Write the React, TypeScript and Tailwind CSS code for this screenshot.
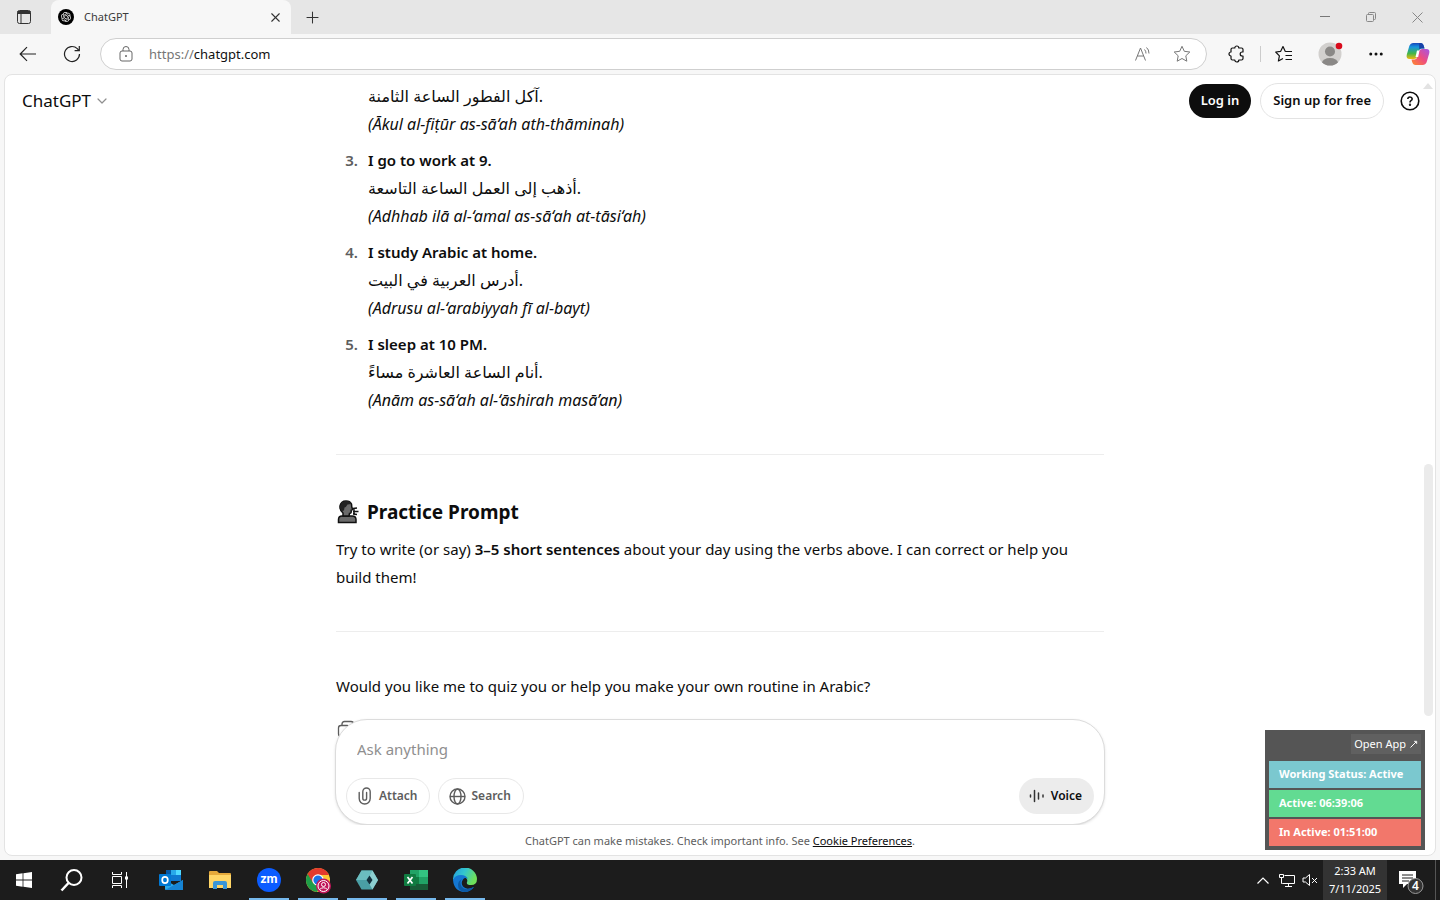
import { useState } from "react";
import type { ReactNode } from "react";
import { ChevronDown, Plus, X, Ellipsis } from "lucide-react";
import { RiOpenaiFill } from "react-icons/ri";

const sentences = [
  {
    id: 2,
    title: "",
    arabic: "آكل الفطور الساعة الثامنة.",
    latin: "(Ākul al-fiṭūr as-sā‘ah ath-thāminah)",
  },
  {
    id: 3,
    title: "I go to work at 9.",
    arabic: "أذهب إلى العمل الساعة التاسعة.",
    latin: "(Adhhab ilā al-‘amal as-sā‘ah at-tāsi‘ah)",
  },
  {
    id: 4,
    title: "I study Arabic at home.",
    arabic: "أدرس العربية في البيت.",
    latin: "(Adrusu al-‘arabiyyah fī al-bayt)",
  },
  {
    id: 5,
    title: "I sleep at 10 PM.",
    arabic: "أنام الساعة العاشرة مساءً.",
    latin: "(Anām as-sā‘ah al-‘āshirah masā’an)",
  },
];

const TitleBar = () => (
  <div className="flex h-[34px] shrink-0 bg-[#e6e6e6]">
    <button aria-label="Tab actions" className="flex w-[51px] items-center justify-center pr-[3px]">
      <svg width="16" height="16" viewBox="0 0 16 16" fill="none" stroke="#333">
        <rect x="1.5" y="1.5" width="13" height="13" rx="2" />
        <path d="M1.5 3.5h13" strokeWidth="3" />
        <path d="M5 5v9.500" />
      </svg>
    </button>
    <div className="flex w-60 items-center rounded-t-lg bg-[#f7f7f7] pl-[7px] pr-2">
      <span className="flex size-4 items-center justify-center rounded-full bg-black text-white">
        <RiOpenaiFill size={12} />
      </span>
      <span className="ml-[10px] flex-1 text-[11px] text-[#3b3b3b]">ChatGPT</span>
      <button aria-label="Close tab" className="text-[#333]">
        <X size={15} strokeWidth={1.8} />
      </button>
    </div>
    <button aria-label="New tab" className="flex w-[42px] items-center justify-center text-[#333]">
      <Plus size={19} strokeWidth={1.3} />
    </button>
    <div className="ml-auto flex">
      <button aria-label="Minimize" className="flex w-[46px] items-center justify-center">
        <svg width="10" height="10" stroke="#777">
          <path d="M0 4.500h10" />
        </svg>
      </button>
      <button aria-label="Restore" className="flex w-[46px] items-center justify-center">
        <svg width="10" height="10" viewBox="0 0 10 10" fill="none" stroke="#888">
          <rect x=".5" y="2.500" width="7" height="7" rx="1" />
          <path d="M2.500 2.500V1.500q0-1 1-1h5q1 0 1 1v5q0 1-1 1H7.500" />
        </svg>
      </button>
      <button aria-label="Close window" className="flex w-[46px] items-center justify-center">
        <svg width="11" height="11" viewBox="0 0 11 11" stroke="#888">
          <path d="m.5.5 10 10m0-10-10 10" />
        </svg>
      </button>
    </div>
  </div>
);

const ToolButton = ({ label, children }: { label: string; children: ReactNode }) => (
  <button aria-label={label} className="flex w-[46px] items-center justify-center">
    {children}
  </button>
);

const Toolbar = () => (
  <div className="flex h-10 shrink-0 items-center bg-[#f7f7f7] pr-[3px]">
    <button aria-label="Back" className="flex w-[50px] items-center justify-center pl-[6px]">
      <svg width="18" height="16" viewBox="0 0 18 16" fill="none" stroke="#222" strokeWidth="1.2">
        <path d="M17 8H1.500M8 1.200 1.200 8 8 14.800" />
      </svg>
    </button>
    <button aria-label="Refresh" className="flex w-[50px] items-center justify-center pr-[6px]">
      <svg width="18" height="18" viewBox="0 0 18 18" fill="none" stroke="#222" strokeWidth="1.200">
        <path d="M16.500 9a7.500 7.500 0 1 1-2.200-5.300L16 5.500" />
        <path d="M16.300 1v4.700h-4.700" />
      </svg>
    </button>
    <div className="flex h-8 flex-1 items-center rounded-full border border-[#cfcfcf] bg-white pl-[18px] pr-[15px]">
      <svg width="14" height="16" viewBox="0 0 14 16" fill="none" stroke="#666">
        <rect x="1" y="5" width="12" height="10" rx="2" />
        <path d="M4 5V3.500a3 3 0 0 1 6 0V5" />
        <circle cx="7" cy="10" r=".6" fill="#666" />
      </svg>
      <a href="https://chatgpt.com" className="ml-4 flex-1 pt-px text-[13px] text-[#111]">
        <span className="text-[#767676]">https://</span>chatgpt.com
      </a>
      <button aria-label="Read aloud" className="mr-[21px]">
        <svg width="18" height="18" viewBox="0 0 18 18" fill="none" stroke="#777">
          <path d="m1.500 15.500 5-12.500 5 12.500M3.300 11h6.400M10.500 4.500q1.500 1.500 1.500 4M12.500 2.500q2.500 2 2.500 6" />
        </svg>
      </button>
      <button aria-label="Add to favorites">
        <svg width="18" height="18" viewBox="0 0 18 18" fill="none" stroke="#777" strokeLinejoin="round">
          <path d="m9 1.300 2.300 5 5.500.7-4 3.800 1 5.400L9 13.500l-4.800 2.700 1-5.400-4-3.800 5.500-.7z" />
        </svg>
      </button>
    </div>
    <div className="ml-[7px] flex h-8 items-center">
      <ToolButton label="Extensions">
        <svg width="18" height="18" viewBox="0 0 18 18" fill="none" stroke="#111" strokeWidth="1.200" strokeLinejoin="round">
          <path d="M4.500 3h2.300a2 2 0 0 1 4 0h2.700q1.500 0 1.500 1.500V7h-.800a2 2 0 0 0 0 4h.8v2.500q0 1.500-1.500 1.500h-2.700a2 2 0 0 1-4 0H4.500Q3 15 3 13.500V11a2 2 0 0 1 0-4V4.500Q3 3 4.500 3z" />
        </svg>
      </ToolButton>
      <span className="h-4 w-px bg-[#ccc]" />
      <ToolButton label="Favorites">
        <svg width="18" height="18" viewBox="0 0 18 18" fill="none" stroke="#111" strokeWidth="1.200" strokeLinejoin="round">
          <path d="M10.300 6.500 8 1.500 5.700 6.300l-5 .700 3.700 3.800-1 5.200L8 13.500M10.300 6.500H17M10.500 10.500H17M10.500 14.500H17" />
        </svg>
      </ToolButton>
      <ToolButton label="Profile">
        <svg width="26" height="26" viewBox="0 0 26 26">
          <clipPath id="avatar">
            <circle cx="13" cy="13" r="11.500" />
          </clipPath>
          <circle cx="13" cy="13" r="11.500" fill="#d2d0ce" />
          <g fill="#8a8886" clipPath="url(#avatar)">
            <circle cx="13" cy="10.500" r="5" />
            <ellipse cx="13" cy="22" rx="8" ry="5" />
          </g>
          <circle cx="22" cy="5" r="3.300" fill="#d90b1c" />
        </svg>
      </ToolButton>
      <ToolButton label="Settings and more">
        <Ellipsis size={18} color="#111" />
      </ToolButton>
      <button aria-label="Copilot" className="flex w-[38px] items-center justify-center">
        <svg width="24" height="22" viewBox="0 0 24 22">
          <defs>
            <linearGradient id="copilotCool" x1="0" y1="1" x2="0" y2="0">
              <stop stopColor="#f2b90f" />
              <stop offset=".35" stopColor="#43b649" />
              <stop offset=".75" stopColor="#1494e0" />
              <stop offset="1" stopColor="#1746b8" />
            </linearGradient>
            <linearGradient id="copilotWarm" x1="0" y1="1" x2="1" y2="0">
              <stop stopColor="#ff8a2b" />
              <stop offset=".5" stopColor="#ee4d80" />
              <stop offset="1" stopColor="#a456e8" />
            </linearGradient>
          </defs>
          <path d="M7.500 0h7q2.500 0 3.300 3l.7 2.500h-3q-2 0-2.700 2.500l-1.500 5.500Q10.300 16 8 16H3.500Q0 16 .7 12L3 4q1-4 4.500-4z" fill="url(#copilotCool)" />
          <path d="M16.500 22h-7Q7 22 6.200 19l-.7-2.500h3q2 0 2.700-2.500l1.500-5.500Q13.700 6 16 6h4.500Q24 6 23.300 10L21 18q-1 4-4.500 4z" fill="url(#copilotWarm)" />
          <path d="M11 7.500h2.500l-1.300 6.500H9.500z" fill="#fff" />
          <path d="M13 0h1.500q2.500 0 3.300 3l.7 2.500h-3q-1.500 0-2.200 1z" fill="#1742a8" />
        </svg>
      </button>
    </div>
  </div>
);

const Conversation = () => (
  <article className="mx-auto w-full max-w-[768px] pt-[7px] text-[15px] leading-7">
    <ol className="flex flex-col gap-2">
      {sentences.map((item) => (
        <li key={item.id} className="flex">
          <span className="mr-[10px] w-[22px] shrink-0 text-right font-semibold text-[#5d5d5d]">
            {item.title && `${item.id}.`}
          </span>
          <div>
            {item.title && <p className="font-semibold">{item.title}</p>}
            <p className="h-7 text-base leading-7">{item.arabic}</p>
            <p className="h-7 text-base leading-7 italic">{item.latin}</p>
          </div>
        </li>
      ))}
    </ol>
    <hr className="mt-10 border-[#ededed]" />
    <h3 className="mt-[43px] flex items-center text-[19px] font-bold">
      <svg width="23" height="24" viewBox="0 0 23 24" className="mr-2" fill="#6b6b6b" stroke="#111" strokeWidth="1.500">
        <path d="M2.500 22.500v-3Q2.500 16 6 16h10q4 0 4 3.500v3z" />
        <path d="M7 16v-3Q3.500 10 4 6q1-5 6-5 4 0 5.500 3l.3 3 .9 2.500-1.500.8v2q0 1-1.700 1.200L13 16z" />
        <path d="M4 8q.5-7 6.500-7 4 0 5 3l-4 .5q-1.500 3-3 3l-.5 3-2 .5z" fill="#222" stroke="none" />
        <path d="m17 8.500 4-.5M17 11.500h5.500M17 14l4 .5M18 8v6.500" />
      </svg>
      Practice Prompt
    </h3>
    <p className="mt-[9px]">
      Try to write (or say) <strong className="font-semibold">3–5 short sentences</strong> about
      your day using the verbs above. I can correct or help you build them!
    </p>
    <hr className="mt-10 border-[#ededed]" />
    <p className="mt-10">
      Would you like me to quiz you or help you make your own routine in Arabic?
    </p>
    <button aria-label="Copy" className="mt-5 ml-[1px] block">
      <svg width="18" height="18" viewBox="0 0 18 18" fill="none" stroke="#5d5d5d" strokeWidth="1.300">
        <rect x="1.500" y="5.500" width="11" height="11" rx="2.500" />
        <path d="M5 5.500V4q0-2.500 2.500-2.500H14q2.500 0 2.500 2.500v6.500q0 2.500-2.500 2.500h-1.500" />
      </svg>
    </button>
  </article>
);

const Composer = () => {
  const [message, setMessage] = useState("");
  return (
    <div className="absolute inset-x-0 bottom-0 flex flex-col items-center">
      <form
        onSubmit={(e) => e.preventDefault()}
        className="flex w-full max-w-[770px] flex-col rounded-[32px] border border-[#dcdcdc] bg-white px-[10px] pt-[15px] pb-[10px] shadow-sm"
      >
        <input
          aria-label="Ask anything"
          placeholder="Ask anything"
          value={message}
          onChange={(e) => setMessage(e.target.value)}
          className="h-7 px-[11px] text-[15px] outline-none placeholder:text-[#8f8f8f]"
        />
        <div className="mt-[15px] flex h-9 gap-2 text-[12px] font-semibold text-[#5d5d5d]">
          <button type="button" className="flex items-center gap-[6px] rounded-full border border-[#e8e8e8] pr-[11px] pl-[10px]">
            <svg width="16" height="18" viewBox="0 0 16 18" fill="none" stroke="currentColor" strokeWidth="1.400" strokeLinecap="round">
              <path d="M2.200 5.500v6a5.500 5.500 0 0 0 11 0V4.700a3.700 3.700 0 0 0-7.400 0v6.500a1.900 1.900 0 0 0 3.800 0V5.500" />
            </svg>
            Attach
          </button>
          <button type="button" className="flex items-center gap-[6px] rounded-full border border-[#e8e8e8] pr-3 pl-[10px]">
            <svg width="17" height="17" viewBox="0 0 17 17" fill="none" stroke="currentColor" strokeWidth="1.400">
              <circle cx="8.500" cy="8.500" r="7.500" />
              <ellipse cx="8.500" cy="8.500" rx="3.500" ry="7.500" />
              <path d="M1 8.500h15" />
            </svg>
            Search
          </button>
          <button type="button" className="ml-auto flex items-center gap-[6px] rounded-full bg-[#ececec] pr-3 pl-[10px] text-[#0d0d0d]">
            <svg width="16" height="16" viewBox="0 0 16 16" stroke="#333" strokeWidth="1.500" strokeLinecap="round">
              <path d="M1.500 7v2M5.500 2.500v11M9.500 5v6M14 7v2" />
            </svg>
            Voice
          </button>
        </div>
      </form>
      <p className="flex h-[30px] w-full max-w-[770px] items-center justify-center bg-white pt-[2px] text-[11px] text-[#5d5d5d]">
        <span>
          ChatGPT can make mistakes. Check important info. See{" "}
          <a href="#cookies" className="text-[#0d0d0d] underline">
            Cookie Preferences
          </a>
          .
        </span>
      </p>
    </div>
  );
};

const StatusWidget = () => (
  <aside className="absolute right-[10px] bottom-[5px] flex w-40 flex-col gap-[2px] bg-[#555] px-1 pt-1 pb-1 text-[11px] font-bold text-white">
    <button className="mb-[5px] flex h-5 items-center gap-1 self-end bg-[#606060] px-[3px] font-normal">
      Open App
      <svg width="8" height="8" viewBox="0 0 8 8" stroke="#fff" fill="#fff">
        <path d="M.5 7.500 6 2" />
        <path d="M4.200 1.200h2.600v2.600z" strokeWidth=".5" />
      </svg>
    </button>
    <p className="flex h-[27px] items-center bg-[#7bc8cf] pl-[10px]">Working Status: Active</p>
    <p className="flex h-[27px] items-center bg-[#62db92] pl-[10px]">Active: 06:39:06</p>
    <p className="flex h-[27px] items-center bg-[#f2776b] pl-[10px]">In Active: 01:51:00</p>
  </aside>
);

const taskbarApps = [
  {
    name: "Outlook",
    open: false,
    icon: (
      <svg width="24" height="24" viewBox="0 0 24 24">
        <path d="M7 2h15v10H7z" fill="#1490df" />
        <path d="M7 2h5v5H7z" fill="#0358a7" />
        <path d="M12 2h5v5h-5z" fill="#28a8ea" />
        <path d="M17 2h5v5h-5z" fill="#50d9ff" />
        <path d="M7 7h5v6H7z" fill="#0a2767" />
        <path d="M12 7h10v6H12z" fill="#0f78d0" />
        <path d="M6 12l9 5 9-5v9q0 1-1 1H7q-1 0-1-1z" fill="#28a8ea" />
        <path d="M6 22 24 12v9q0 1-1 1z" fill="#1684d5" />
        <rect y="6" width="12" height="12" rx="1" fill="#0078d4" />
        <ellipse cx="6" cy="12" rx="2.800" ry="3.200" fill="none" stroke="#fff" strokeWidth="1.700" />
      </svg>
    ),
  },
  {
    name: "File Explorer",
    open: false,
    icon: (
      <svg width="24" height="24" viewBox="0 0 24 24">
        <path d="M1 4q0-1 1-1h7l2 2h11q1 0 1 1v4H1z" fill="#e5a93b" />
        <path d="M1 7h22v13H1z" fill="#ffd667" />
        <path d="M5 21v-6q0-2 2-2h10q2 0 2 2v6h-4v-4H9v4z" fill="#3a96d8" />
      </svg>
    ),
  },
  {
    name: "Zoom",
    open: true,
    icon: (
      <span className="flex size-6 items-center justify-center rounded-full bg-[#0b5cff] pb-[2px] font-['Lato'] text-[13px] font-black text-white">
        zm
      </span>
    ),
  },
  {
    name: "Chrome",
    open: true,
    icon: (
      <svg width="26" height="28" viewBox="0 0 26 28">
        <circle cx="13" cy="14" r="12" fill="#fcc934" />
        <path d="M13 14 2.600 8A12 12 0 0 0 12 26l5-9z" fill="#1e9e48" />
        <path d="M13 14V9h11A12 12 0 0 0 2.600 8l5.500 9z" fill="#e33b2e" />
        <circle cx="13" cy="14" r="5.800" fill="#fff" />
        <circle cx="13" cy="14" r="4.600" fill="#1a73e8" />
        <circle cx="18.500" cy="20" r="7.500" fill="#c2185b" />
        <g fill="none" stroke="#fff">
          <circle cx="18.500" cy="20" r="5.500" />
          <circle cx="18.500" cy="18.500" r="2" />
          <path d="M14.500 23.500q4-3.500 8 0" />
        </g>
      </svg>
    ),
  },
  {
    name: "Time tracker",
    open: true,
    icon: (
      <svg width="24" height="24" viewBox="0 0 24 24">
        <path d="M6.500 2.500h11L23 12l-5.500 9.500h-11L1 12z" fill="#4a9fa5" />
        <path d="M6.500 2.500h11L12 12H1z" fill="#6bbdbf" />
        <path d="M17.500 2.500 23 12l-5.500 9.500L12 12z" fill="#8ccfd0" />
        <path d="m14.500 7.500 3 4.500-3 4.500-3-4.500z" fill="#12303c" />
      </svg>
    ),
  },
  {
    name: "Excel",
    open: true,
    icon: (
      <svg width="24" height="24" viewBox="0 0 24 24">
        <path d="M6 2h9v7H6z" fill="#21a366" />
        <path d="M15 2h9v7h-9z" fill="#33c481" />
        <path d="M6 9h9v7H6z" fill="#107c41" />
        <path d="M15 9h9v7h-9z" fill="#21a366" />
        <path d="M6 16h18v6H6z" fill="#185c37" />
        <rect y="6" width="12" height="12" rx="1" fill="#107c41" />
        <path d="m3.500 9 5 6.500m0-6.500-5 6.500" stroke="#fff" strokeWidth="1.700" />
      </svg>
    ),
  },
  {
    name: "Edge",
    open: true,
    icon: (
      <svg width="24" height="24" viewBox="0 0 24 24">
        <defs>
          <linearGradient id="edgeTop" x1="0" y1="0" x2="1" y2=".4">
            <stop stopColor="#2299dd" />
            <stop offset=".5" stopColor="#33c6cf" />
            <stop offset="1" stopColor="#6fe05a" />
          </linearGradient>
        </defs>
        <path d="M0 12a12 12 0 0 1 24-1q0 6-6 6-5 0-4-3 1-2-1-4-3-2.500-7-1-4 1.500-6 3z" fill="url(#edgeTop)" />
        <path d="M0 12Q2 7 8 7q5 0 7 4-3-2-5 .500-2.500 3.500 0 7 3.500 4 11 .500-4 5-9.500 5Q1 23.500 0 12z" fill="#1477d2" />
        <path d="M9 11q-3 3-.5 7.500 3.500 5 12.500.500-3.500 5-9.500 5Q5 23 5 17q0-4 4-6z" fill="#0c59a4" />
      </svg>
    ),
  },
];

const Taskbar = () => (
  <footer className="flex h-10 shrink-0 bg-[#1c1c1c] text-white">
    <button aria-label="Start" className="flex w-12 items-center justify-center">
      <svg width="16" height="16" viewBox="0 0 16 16" fill="#fff">
        <path d="m0 2.200 6.600-.9v6.300H0zM7.400 1.200 16 0v7.600H7.400zM0 8.400h6.600v6.300L0 13.800zM7.400 8.400H16V16l-8.600-1.200z" />
      </svg>
    </button>
    <button aria-label="Search Windows" className="flex w-12 items-center justify-center">
      <svg width="24" height="24" viewBox="0 0 24 24" fill="none" stroke="#fff" strokeWidth="2">
        <circle cx="14" cy="9.500" r="7.500" />
        <path d="M8.500 15 1.500 22.500" strokeWidth="2.500" />
      </svg>
    </button>
    <button aria-label="Task view" className="flex w-12 items-center justify-center">
      <svg width="18" height="16" viewBox="0 0 18 16" fill="none" stroke="#fff">
        <path d="M1.500 4.500h9v7h-9zM1.500 0v2.500h9V0M1.500 16v-2.500h9V16M15.500 0v16" />
        <path d="M14 4.500h3v3h-3z" fill="#fff" stroke="none" />
      </svg>
    </button>
    <nav aria-label="Apps" className="ml-[3px] flex gap-px">
      {taskbarApps.map((app) => (
        <button key={app.name} aria-label={app.name} className="flex w-12 flex-col items-center">
          <span className="flex h-[38px] items-center pt-[2px]">{app.icon}</span>
          {app.open && <span className="h-[2px] w-10 bg-[#76b9ed]" />}
        </button>
      ))}
    </nav>
    <div className="ml-auto flex items-center">
      <button aria-label="Show hidden icons" className="flex w-6 justify-center">
        <svg width="12" height="7" viewBox="0 0 12 7" fill="none" stroke="#fff" strokeWidth="1.200">
          <path d="m.5 6.500 5.500-5.500 5.500 5.500" />
        </svg>
      </button>
      <button aria-label="Network" className="flex w-6 justify-center">
        <svg width="17" height="15" viewBox="0 0 17 15" fill="none" stroke="#fff">
          <path d="M5.500 2.500h10v8h-12M9.500 10.500v3M6 13.500h7" />
          <path d="M.5 1.500h4v3h-4zM2.500 4.500v6h1" />
        </svg>
      </button>
      <button aria-label="Muted" className="flex w-6 justify-center pr-[2px]">
        <svg width="16" height="14" viewBox="0 0 16 14" fill="none" stroke="#fff">
          <path d="M1 5v4h2.500L7.500 12.500v-11L3.500 5zM10 5l5 5m0-5-5 5" />
        </svg>
      </button>
      <div className="flex h-10 w-16 flex-col items-center justify-center bg-[#333] text-[11px] leading-[18px]">
        <time>2:33 AM</time>
        <time>7/11/2025</time>
      </div>
      <button aria-label="Notifications" className="flex w-12 justify-center pr-1">
        <svg width="30" height="28" viewBox="0 0 30 28">
          <path d="M5 5h17v13h-9l-4 4v-4H5z" fill="#fff" />
          <path d="M8 9h11M8 12h11M8 15h7" stroke="#1c1c1c" />
          <circle cx="21.500" cy="20" r="7.500" fill="#333" stroke="#999" />
          <text x="21.500" y="24" textAnchor="middle" fill="#fff" fontSize="12" fontWeight="600" fontFamily="Noto Sans">4</text>
        </svg>
      </button>
      <span className="mr-1 h-10 w-px bg-[#555]" />
    </div>
  </footer>
);

const App = () => {
  return (
    <div className="flex h-screen flex-col overflow-hidden bg-[#f7f7f7] font-['Noto_Sans','Open_Sans','DejaVu_Sans',sans-serif] text-[#0d0d0d]">
      <TitleBar />
      <Toolbar />
      <main className="relative mx-1 mb-1 flex-1 overflow-hidden rounded-lg border border-[#e3e3e3] bg-white">
        <Conversation />
        {/* header floats over the scrolled conversation */}
        <header className="absolute inset-x-0 top-0 flex h-[51px] items-center pr-[15px] pl-[17px]">
          <button className="flex items-center gap-[3px] text-[17px]">
            ChatGPT
            <ChevronDown size={16} color="#8f8f8f" strokeWidth={1.8} />
          </button>
          <div className="ml-auto flex items-center text-[13px] font-semibold">
            <button className="h-[34px] rounded-full bg-[#0d0d0d] px-3 text-white">Log in</button>
            <button className="ml-[9px] h-9 rounded-full border border-[#e3e3e3] px-3">Sign up for free</button>
            <button aria-label="Help" className="ml-4">
              <svg width="20" height="20" viewBox="0 0 20 20" fill="none" stroke="#0d0d0d" strokeWidth="1.600">
                <circle cx="10" cy="10" r="8.800" />
                <path d="M7.800 8Q8 6 10 6t2.200 1.800q0 1.200-1.200 1.800-1 .600-1 1.800" />
                <circle cx="10" cy="13.800" r=".4" />
              </svg>
            </button>
          </div>
        </header>
        <Composer />
        {/* scrollbar */}
        <div className="absolute inset-y-0 right-0 flex w-[14px] flex-col items-center pt-2">
          <svg width="10" height="6" fill="#e3e3e3">
            <path d="m5 0 5 6H0z" />
          </svg>
          <span className="mt-[375px] h-[252px] w-[9px] rounded-full bg-[#ebebeb]" />
        </div>
        <StatusWidget />
      </main>
      <Taskbar />
    </div>
  );
};

export default App;
